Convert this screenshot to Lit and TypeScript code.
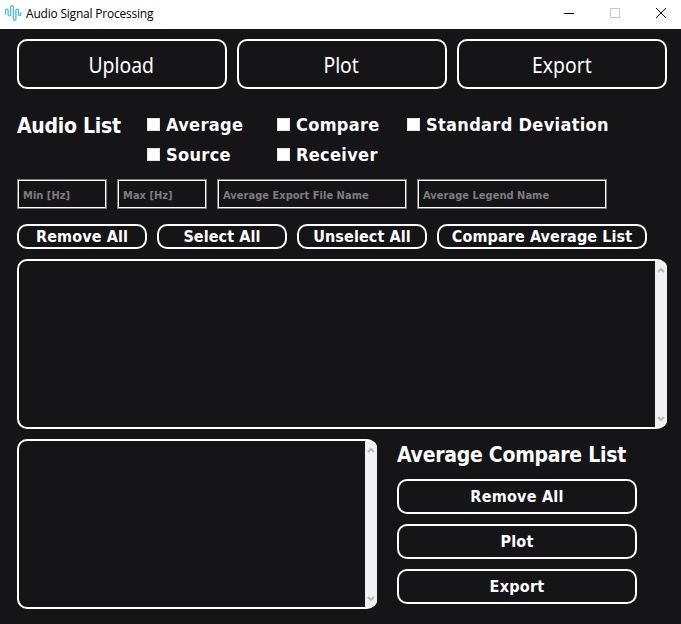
import { LitElement, html, css } from "lit";
import { customElement, property } from "lit/decorators.js";

@customElement("list-panel")
class ListPanel extends LitElement {
  static styles = css`
    :host { display: block; height: 170px; box-sizing: border-box; }
    .frame { height: 100%; box-sizing: border-box; border: 2px solid #fff; border-radius: 10px; display: flex; justify-content: flex-end; }
    .bar { width: 12px; margin-right: -2px; background: #f0f0f0; border-radius: 0 6px 6px 0; display: flex; flex-direction: column; justify-content: space-between; align-items: center; padding: 6px 0 5px; box-sizing: border-box; }
    svg { width: 8px; height: 6px; fill: none; stroke: #b9b9b9; stroke-width: 2; }
  `;
  render() {
    return html`<div class="frame"><div class="bar">
      <svg viewBox="0 0 8 6"><path d="M1 5 4 2 7 5" /></svg>
      <svg viewBox="0 0 8 6"><path d="M1 1 4 4 7 1" /></svg>
    </div></div>`;
  }
}

@customElement("check-option")
class CheckOption extends LitElement {
  @property() label = "";
  static styles = css`
    :host { display: flex; align-items: center; height: 30px; white-space: nowrap; }
    .box { width: 13px; height: 13px; box-sizing: border-box; background: #fff; border: 1px solid #e4e4e4; margin: 0 6px 1px 0; flex: none; }
    .text { font: bold 18px/30px "DejaVu Sans Condensed", "DejaVu Sans", sans-serif; font-stretch: condensed; letter-spacing: 0.33px; color: #fff; }
  `;
  render() {
    return html`<span class="box"></span><span class="text">${this.label}</span>`;
  }
}

@customElement("app-root")
class AppRoot extends LitElement {
  static styles = css`
    :host { display: block; width: 681px; height: 624px; background: #151517; color: #fff; overflow: hidden; font: bold 16px "DejaVu Sans Condensed", "DejaVu Sans", sans-serif; font-stretch: condensed; }
    .titlebar { height: 29px; box-sizing: border-box; background: #fff; color: #000; display: flex; align-items: center; padding: 0 14px 3px 4px; font: 12px "Open Sans", sans-serif; }
    .logo { width: 18px; height: 18px; margin-right: 4px; }
    .title { flex: 1; letter-spacing: -0.21px; padding-top: 1px; }
    .controls { display: flex; gap: 34px; }
    .controls svg { width: 12px; height: 12px; fill: none; stroke: #000; }
    .controls .off { stroke: #c8c8c8; }
    main { padding: 10px 14px 0 17px; }
    button { appearance: none; background: none; color: inherit; font: inherit; letter-spacing: 0.25px; border: 2px solid #fff; border-radius: 10px; padding: 0; margin: 0; box-sizing: border-box; white-space: nowrap; display: flex; align-items: center; justify-content: center; }
    .primary { display: grid; grid-template-columns: repeat(3, 210px); gap: 10px; }
    .primary button { height: 50px; font: 22px "Noto Sans", sans-serif; letter-spacing: 0; }
    .primary span { transform: scaleX(0.88); margin-right: 1px; }
    .options { display: grid; grid-template-columns: 130px 130px 130px 210px; margin-top: 21px; height: 60px; }
    h2 { margin: 0; font-size: 21px; line-height: 32px; height: 30px; font-weight: bold; letter-spacing: -0.27px; white-space: nowrap; }
    .options h2 { grid-row: span 2; }
    .fields { display: grid; grid-template-columns: 90px 90px 190px 190px; gap: 10px; margin-top: 9px; }
    input { height: 30px; width: 100%; box-sizing: border-box; background: none; border: 1px solid #767676; box-shadow: inset 0 0 0 1px #fff; padding: 2px 5px 0; margin: 0; color: #fff; font: bold 11px "DejaVu Sans Condensed", "DejaVu Sans", sans-serif; font-stretch: condensed; letter-spacing: 0.03px; border-radius: 0; }
    input::placeholder { color: #7d7d7e; opacity: 1; }
    .actions { display: grid; grid-template-columns: 130px 130px 130px 210px; gap: 10px; margin: 15px 0 10px; }
    .actions button { height: 25px; letter-spacing: 0.1px; }
    .lower { display: grid; grid-template-columns: 360px 240px; gap: 20px; margin-top: 10px; }
    .side { display: flex; flex-direction: column; gap: 10px; }
    .side button { height: 35px; }
  `;
  render() {
    return html`
      <header class="titlebar">
        <svg class="logo" viewBox="0 0 18 18" fill="none" stroke="#48bfdc" stroke-width="1.3" stroke-linecap="round">
          <path d="M1.5 10V6.5a1.3 1.3 0 0 1 2.6 0v4a1.3 1.3 0 0 0 2.6 0V3a1.3 1.3 0 0 1 2.6 0v12a1.3 1.3 0 0 0 2.6 0V6.5a1.3 1.3 0 0 1 2.6 0v4a1.1 1.1 0 0 0 2.2 0V9" />
        </svg>
        <span class="title">Audio Signal Processing</span>
        <div class="controls">
          <svg viewBox="0 0 12 12"><path d="M1 6.5h10" /></svg>
          <svg class="off" viewBox="0 0 12 12"><path d="M1.5 1.5h9v9h-9z" /></svg>
          <svg viewBox="0 0 12 12"><path d="M1 1 11 11M11 1 1 11" /></svg>
        </div>
      </header>
      <main>
        <div class="primary">${["Upload", "Plot", "Export"].map((t) => html`<button><span>${t}</span></button>`)}</div>
        <div class="options">
          <h2>Audio List</h2>
          ${["Average", "Compare", "Standard Deviation", "Source", "Receiver"].map((t) => html`<check-option label=${t}></check-option>`)}
        </div>
        <div class="fields">
          ${["Min [Hz]", "Max [Hz]", "Average Export File Name", "Average Legend Name"].map((t) => html`<input placeholder=${t} />`)}
        </div>
        <div class="actions">
          ${["Remove All", "Select All", "Unselect All", "Compare Average List"].map((t) => html`<button>${t}</button>`)}
        </div>
        <list-panel></list-panel>
        <div class="lower">
          <list-panel></list-panel>
          <div class="side">
            <h2>Average Compare List</h2>
            ${["Remove All", "Plot", "Export"].map((t) => html`<button>${t}</button>`)}
          </div>
        </div>
      </main>
    `;
  }
}
